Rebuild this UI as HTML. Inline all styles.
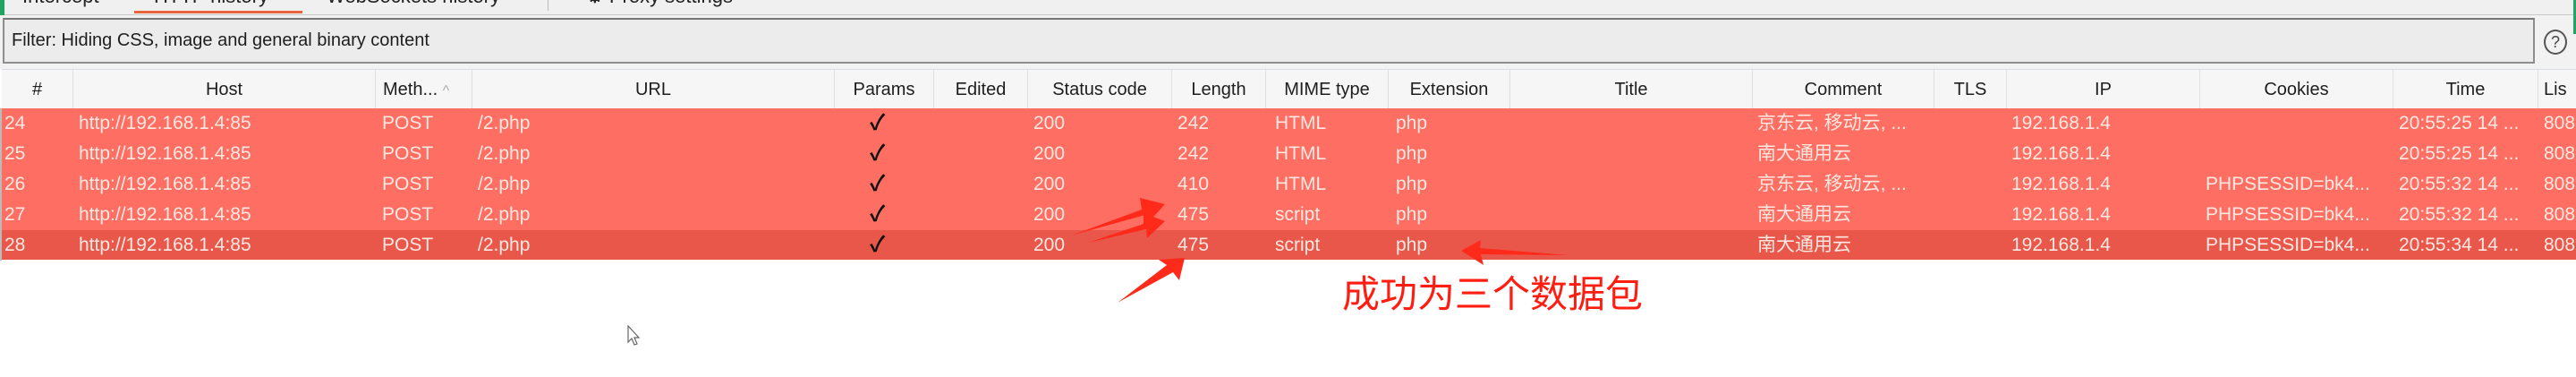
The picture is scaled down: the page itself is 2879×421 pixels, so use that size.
<!DOCTYPE html>
<html><head><meta charset="utf-8"><style>
*{margin:0;padding:0;box-sizing:border-box}
body{width:2879px;height:421px;background:#fff;position:relative;overflow:hidden;font-family:"Liberation Sans","Noto Sans CJK SC",sans-serif}
.a{position:absolute;white-space:nowrap}
.tabs{position:absolute;left:0;top:0;width:2879px;height:17px;background:#f0f0f0;border-bottom:1px solid #c8c8c8}
.tab{position:absolute;top:-17px;font-size:22px;color:#222}
.filterwrap{position:absolute;left:0;top:17px;width:2879px;height:60px;background:#f2f2f2}
.filter{position:absolute;left:3px;top:3px;width:2830px;height:51px;background:#ececec;border:2px solid #8e8e8e;border-top-color:#777}
.hdr{position:absolute;left:2px;top:77px;width:2877px;height:44px;background:#f6f6f6;border-top:1px solid #d8dde6}
.hc{position:absolute;top:0;height:44px;border-left:1px solid #e0e0e0;font-size:20px;color:#1e1e1e;line-height:44px;text-align:center}
.row{position:absolute;left:2px;width:2877px;height:34px;background:#ff6e62}
.row span{position:absolute;top:0;line-height:34px;font-size:21px;color:#fde9e2}
.row span.ck{color:#111;font-size:24px;font-weight:bold}
</style></head><body>
<div class="tabs">
<div class="tab" style="left:25px">Intercept</div>
<div class="tab" style="left:172px">HTTP history</div>
<div style="position:absolute;left:150px;top:12px;width:188px;height:3px;background:#e8643c"></div>
<div class="tab" style="left:365px">WebSockets history</div>
<div style="position:absolute;left:612px;top:0;width:1px;height:12px;background:#bbb"></div>
<div class="tab" style="left:655px">⚙ Proxy settings</div>
</div>
<div style="position:absolute;left:0;top:0;width:5px;height:37px;background:#1fa463"></div>
<div class="filterwrap"><div class="filter"><div class="a" style="left:8px;top:12px;font-size:20px;color:#1e1e1e">Filter: Hiding CSS, image and general binary content</div></div>
<div class="a" style="left:2843px;top:16px;width:26px;height:28px;border:2px solid #555;border-radius:50%;text-align:center;font-size:18px;line-height:24px;color:#444">?</div>
</div>
<div style="position:absolute;left:2876px;top:0;width:3px;height:38px;background:#1fa463"></div>
<div class="hdr">
<div class="hc" style="left:0;width:79px;border-left:none">#</div>
<div class="hc" style="left:79px;width:338px">Host</div>
<div class="hc" style="left:417px;width:108px;text-align:left;padding-left:8px">Meth... <span style="color:#aaa;font-size:16px">^</span></div>
<div class="hc" style="left:525px;width:405px">URL</div>
<div class="hc" style="left:930px;width:111px">Params</div>
<div class="hc" style="left:1041px;width:105px">Edited</div>
<div class="hc" style="left:1146px;width:161px">Status code</div>
<div class="hc" style="left:1307px;width:105px">Length</div>
<div class="hc" style="left:1412px;width:137px">MIME type</div>
<div class="hc" style="left:1549px;width:136px">Extension</div>
<div class="hc" style="left:1685px;width:271px">Title</div>
<div class="hc" style="left:1956px;width:203px">Comment</div>
<div class="hc" style="left:2159px;width:81px">TLS</div>
<div class="hc" style="left:2240px;width:216px">IP</div>
<div class="hc" style="left:2456px;width:216px">Cookies</div>
<div class="hc" style="left:2672px;width:162px">Time</div>
<div class="hc" style="left:2834px;width:60px;text-align:left;padding-left:6px">Lis</div>
</div>

<div class="row" style="top:121px"><span style="left:3px">24</span><span style="left:86px">http://192.168.1.4:85</span><span style="left:425px">POST</span><span style="left:532px">/2.php</span><span class="ck" style="left:970px">✓</span><span style="left:1153px">200</span><span style="left:1314px">242</span><span style="left:1423px">HTML</span><span style="left:1558px">php</span><span style="left:1962px">京东云, 移动云, ...</span><span style="left:2246px">192.168.1.4</span><span style="left:2679px">20:55:25 14 ...</span><span style="left:2841px">808</span></div>
<div class="row" style="top:155px"><span style="left:3px">25</span><span style="left:86px">http://192.168.1.4:85</span><span style="left:425px">POST</span><span style="left:532px">/2.php</span><span class="ck" style="left:970px">✓</span><span style="left:1153px">200</span><span style="left:1314px">242</span><span style="left:1423px">HTML</span><span style="left:1558px">php</span><span style="left:1962px">南大通用云</span><span style="left:2246px">192.168.1.4</span><span style="left:2679px">20:55:25 14 ...</span><span style="left:2841px">808</span></div>
<div class="row" style="top:189px"><span style="left:3px">26</span><span style="left:86px">http://192.168.1.4:85</span><span style="left:425px">POST</span><span style="left:532px">/2.php</span><span class="ck" style="left:970px">✓</span><span style="left:1153px">200</span><span style="left:1314px">410</span><span style="left:1423px">HTML</span><span style="left:1558px">php</span><span style="left:1962px">京东云, 移动云, ...</span><span style="left:2246px">192.168.1.4</span><span style="left:2463px">PHPSESSID=bk4...</span><span style="left:2679px">20:55:32 14 ...</span><span style="left:2841px">808</span></div>
<div class="row" style="top:223px"><span style="left:3px">27</span><span style="left:86px">http://192.168.1.4:85</span><span style="left:425px">POST</span><span style="left:532px">/2.php</span><span class="ck" style="left:970px">✓</span><span style="left:1153px">200</span><span style="left:1314px">475</span><span style="left:1423px">script</span><span style="left:1558px">php</span><span style="left:1962px">南大通用云</span><span style="left:2246px">192.168.1.4</span><span style="left:2463px">PHPSESSID=bk4...</span><span style="left:2679px">20:55:32 14 ...</span><span style="left:2841px">808</span></div>
<div class="row" style="top:257px;height:33px;background:#e9574b"><span style="left:3px">28</span><span style="left:86px">http://192.168.1.4:85</span><span style="left:425px">POST</span><span style="left:532px">/2.php</span><span class="ck" style="left:970px">✓</span><span style="left:1153px">200</span><span style="left:1314px">475</span><span style="left:1423px">script</span><span style="left:1558px">php</span><span style="left:1962px">南大通用云</span><span style="left:2246px">192.168.1.4</span><span style="left:2463px">PHPSESSID=bk4...</span><span style="left:2679px">20:55:34 14 ...</span><span style="left:2841px">808</span></div>
<div style="position:absolute;left:0;top:121px;width:2px;height:170px;background:#bbb"></div>

<svg class="a" style="left:0;top:0" width="2879" height="421">
<g fill="#ff2a1a">
<polygon points="1197,263 1276,234 1274,221 1302,228 1282,250 1280,240"/>
<polygon points="1216,271 1278,250 1278,238 1302,247 1282,266 1281,256"/>
<polygon points="1249,338 1304,296 1295,290 1324,288 1318,313 1311,304"/>
<polygon points="1633,280 1655,268 1654,277 1753,285 1655,284 1658,296"/>
</g>
<text x="1500" y="343" font-size="42" fill="#ff1d12" font-family="Noto Sans CJK SC, sans-serif">成功为三个数据包</text>
<path d="M702,364 L702,382 L706,378 L709,385 L712,384 L709,377 L714,377 Z" fill="#fff" stroke="#666" stroke-width="1.2"/>
</svg>
</body></html>
